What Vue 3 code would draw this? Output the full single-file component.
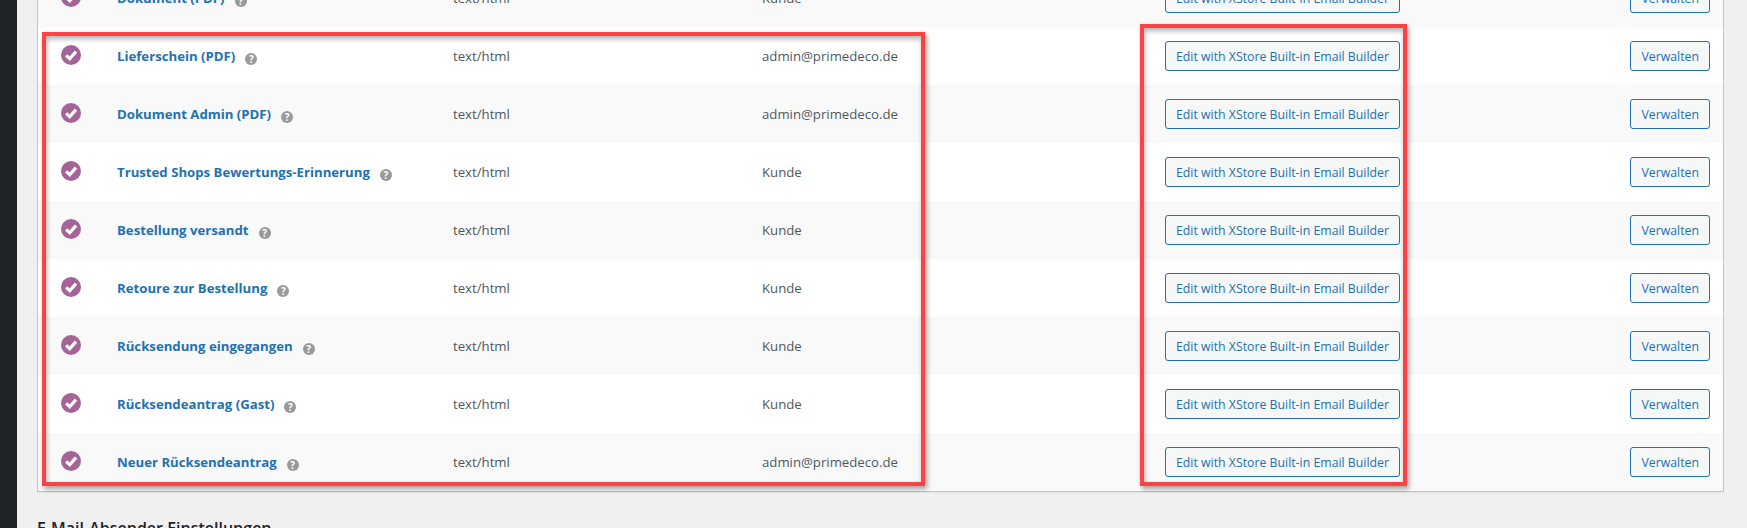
<template>
  <div class="page">
    <aside class="sidebar"></aside>
    <main class="content">
      <div class="table-wrap">
        <table class="mail-table">
          <colgroup>
            <col class="col-status" />
            <col class="col-name" />
            <col class="col-type" />
            <col class="col-recipient" />
            <col class="col-builder" />
            <col class="col-manage" />
          </colgroup>
          <tbody>
            <tr v-for="mail in mails" :key="mail.name">
              <td class="status">
                <svg class="check" viewBox="0 0 20 20" width="20" height="20" aria-hidden="true">
                  <circle cx="10" cy="10" r="10" fill="#a46497" />
                  <path d="M5.2 10.4 8.7 13.8 15 6.6" fill="none" stroke="#fff" stroke-width="3.2" />
                </svg>
              </td>
              <td class="name">
                <a class="mail-link">{{ mail.name }}</a>
                <span class="help">?</span>
              </td>
              <td>text/html</td>
              <td>{{ mail.recipient }}</td>
              <td><button class="btn">Edit with XStore Built-in Email Builder</button></td>
              <td class="manage"><button class="btn">Verwalten</button></td>
            </tr>
          </tbody>
        </table>
        <div class="mark mark-left"></div>
        <div class="mark mark-right"></div>
      </div>
      <h2 class="section-title">E-Mail-Absender Einstellungen</h2>
    </main>
  </div>
</template>

<script setup>
const mails = [
  { name: 'Dokument (PDF)', recipient: 'Kunde' },
  { name: 'Lieferschein (PDF)', recipient: 'admin@primedeco.de' },
  { name: 'Dokument Admin (PDF)', recipient: 'admin@primedeco.de' },
  { name: 'Trusted Shops Bewertungs-Erinnerung', recipient: 'Kunde' },
  { name: 'Bestellung versandt', recipient: 'Kunde' },
  { name: 'Retoure zur Bestellung', recipient: 'Kunde' },
  { name: 'Rücksendung eingegangen', recipient: 'Kunde' },
  { name: 'Rücksendeantrag (Gast)', recipient: 'Kunde' },
  { name: 'Neuer Rücksendeantrag', recipient: 'admin@primedeco.de' },
]
</script>

<style>
html,
body {
  margin: 0;
  background: #f0f0f1;
  overflow: hidden;
}
</style>

<style scoped>
.page {
  display: flex;
  height: 528px;
  overflow: hidden;
  font-family: "Open Sans", "Noto Sans", sans-serif;
  font-size: 13.2px;
  color: #50575e;
}

.sidebar {
  flex: 0 0 17px;
  background: #1d2327;
}

.content {
  flex: 1;
  min-width: 0;
  padding-left: 20px;
  padding-right: 23px;
}

.table-wrap {
  position: relative;
  margin-top: -31px;
  border: 1px solid #c3c4c7;
  border-top: 0;
  background: #fff;
  box-shadow: 0 1px 1px rgba(0, 0, 0, 0.04);
}

.mail-table {
  width: 100%;
  border-collapse: collapse;
  table-layout: fixed;
}

.col-status { width: 79px; }
.col-name { width: 336px; }
.col-type { width: 309px; }
.col-recipient { width: 403px; }
.col-builder { width: 377px; }

.mail-table tr {
  height: 58px;
}

.mail-table tr:nth-child(odd) {
  background: #f9f9f9;
}

.mail-table td {
  padding: 0;
  vertical-align: middle;
}

.status {
  padding-left: 24px !important;
}

.check {
  display: block;
  margin: -3px 0 0 -1px;
}

.mail-link {
  color: #2271b1;
  font-weight: 700;
}

.help {
  display: inline-block;
  width: 12px;
  height: 12px;
  margin-left: 10px;
  border-radius: 50%;
  background: #999;
  color: #fff;
  font-size: 10px;
  font-weight: 700;
  line-height: 12px;
  text-align: center;
  vertical-align: -2px;
}

.btn {
  height: 30px;
  padding: 0 10px;
  border: 1px solid #2271b1;
  border-radius: 3px;
  background: #f6f7f7;
  color: #2271b1;
  font: inherit;
  font-size: 12.3px;
  white-space: nowrap;
}

.manage {
  text-align: right;
  padding-right: 13px !important;
}

.mark {
  position: absolute;
  box-sizing: border-box;
  border: 4px solid #fd4245;
  box-shadow: 2px 3px 5px rgba(0, 0, 0, 0.35), inset 1px 3px 5px rgba(0, 0, 0, 0.3);
  pointer-events: none;
}

.mark-left {
  left: 4px;
  top: 63px;
  width: 883px;
  height: 454px;
}

.mark-right {
  left: 1102px;
  top: 55px;
  width: 267px;
  height: 462px;
}

.section-title {
  margin: 25px 0 0;
  color: #1d2327;
  font-size: 16px;
  font-weight: 600;
}
</style>
